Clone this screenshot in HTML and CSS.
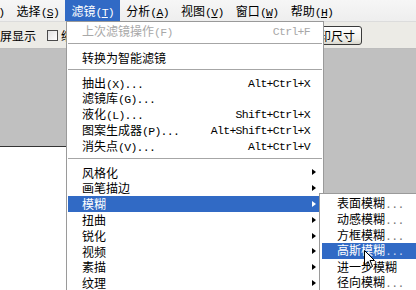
FILE: index.html
```html
<!DOCTYPE html>
<html lang="zh">
<head>
<meta charset="utf-8">
<title>滤镜菜单</title>
<link rel="stylesheet" href="styles.css">
</head>
<body>
<div class="menubar">
  <span class="mi first">图像<span class="a">(<span class="u">I</span>)</span></span>
  <span class="mi">选择<span class="a">(<span class="u">S</span>)</span></span>
  <span class="mi on">滤镜<span class="a">(<span class="u">T</span>)</span></span>
  <span class="mi">分析<span class="a">(<span class="u">A</span>)</span></span>
  <span class="mi">视图<span class="a">(<span class="u">V</span>)</span></span>
  <span class="mi">窗口<span class="a">(<span class="u">W</span>)</span></span>
  <span class="mi">帮助<span class="a">(<span class="u">H</span>)</span></span>
</div>
<div class="toolbar">
  <span class="pre">以满屏显示</span>
  <span class="cb"></span>
  <span class="lbl">缩放所有窗口</span>
  <span class="btn">打印尺寸</span>
</div>
<div class="workspace">
  <div class="left">
    <div class="panel"></div>
    <div class="doc"></div>
  </div>
  <div class="right"></div>
</div>

<div class="menu">
  <div class="row dis"><span>上次滤镜操作<span class="a">(F)</span></span><span class="sc">Ctrl+F</span></div>
  <div class="sep"></div>
  <div class="row"><span>转换为智能滤镜</span></div>
  <div class="sep"></div>
  <div class="row"><span>抽出<span class="a">(X)...</span></span><span class="sc">Alt+Ctrl+X</span></div>
  <div class="row"><span>滤镜库<span class="a">(G)...</span></span></div>
  <div class="row"><span>液化<span class="a">(L)...</span></span><span class="sc">Shift+Ctrl+X</span></div>
  <div class="row"><span>图案生成器<span class="a">(P)...</span></span><span class="sc">Alt+Shift+Ctrl+X</span></div>
  <div class="row"><span>消失点<span class="a">(V)...</span></span><span class="sc">Alt+Ctrl+V</span></div>
  <div class="sep"></div>
  <div class="row"><span>风格化</span><i class="arr"></i></div>
  <div class="row"><span>画笔描边</span><i class="arr"></i></div>
  <div class="row on"><span>模糊</span><i class="arr"></i></div>
  <div class="row"><span>扭曲</span><i class="arr"></i></div>
  <div class="row"><span>锐化</span><i class="arr"></i></div>
  <div class="row"><span>视频</span><i class="arr"></i></div>
  <div class="row"><span>素描</span><i class="arr"></i></div>
  <div class="row"><span>纹理</span><i class="arr"></i></div>
</div>

<div class="sub">
  <div class="row"><span>表面模糊<span class="a dots">...</span></span></div>
  <div class="row"><span>动感模糊<span class="a dots">...</span></span></div>
  <div class="row"><span>方框模糊<span class="a dots">...</span></span></div>
  <div class="row on"><span>高斯模糊<span class="a dots">...</span></span></div>
  <div class="row"><span>进一步模糊</span></div>
  <div class="row"><span>径向模糊<span class="a dots">...</span></span></div>
</div>

<svg class="cursor" width="12" height="19" viewBox="0 0 12 19">
  <path d="M0.5 0.5 V15 L4 11.5 L6.5 17.5 L8.5 16.5 L6 10.5 H10.5 Z" fill="#fff" stroke="#000" stroke-width="1"/>
</svg>
</body>
</html>
```

FILE: styles.css
```css
* {
  box-sizing: border-box;
  margin: 0;
  padding: 0;
}

html, body {
  width: 416px;
  height: 290px;
  overflow: hidden;
}

body {
  position: relative;
  font-family: "Noto Sans CJK SC", sans-serif;
  font-size: 12px;
  color: #000;
  background: #c0c0c0;
}

.a {
  font-family: "Liberation Mono", monospace;
  font-size: 11.5px;
  letter-spacing: -0.7px;
}

.u {
  text-decoration: underline;
}

/* menu bar */
.menubar {
  height: 21px;
  display: flex;
  white-space: nowrap;
  background: linear-gradient(#f6f6f6, #eeeeee);
}

.mi {
  padding: 0 6.1px;
  line-height: 21px;
}

.mi.first {
  margin-left: -44.3px;
}

.mi.on {
  background: #316ac5;
  color: #fff;
}

/* toolbar */
.toolbar {
  height: 28px;
  display: flex;
  align-items: center;
  white-space: nowrap;
  background: #ecebe6;
  border-top: 1px solid #dcdcdc;
  border-bottom: 1px solid #bdbdbd;
}

.pre {
  margin-left: -24px;
}

.cb {
  width: 11px;
  height: 11px;
  margin-left: 11px;
  border: 1px solid #4a4a4a;
  background: linear-gradient(135deg, #e0e0e0, #fff);
}

.lbl {
  margin-left: 3px;
}

.btn {
  margin-left: auto;
  margin-right: 54px;
  height: 19px;
  line-height: 17px;
  padding: 0 6px;
  border: 1px solid #3a3a3a;
  border-radius: 3px;
  background: linear-gradient(#ffffff, #f0f0ea 70%, #d8d6cc);
}

/* workspace */
.workspace {
  display: flex;
  height: 241px;
}

.left {
  width: 66px;
  display: flex;
  flex-direction: column;
}

.panel {
  height: 98px;
  background: #c0c0c0;
  border-bottom: 1px solid #333;
}

.doc {
  flex: 1;
  background: #fff;
}

.right {
  flex: 1;
  background: #c0c0c0;
}

/* dropdown menu */
.menu {
  position: absolute;
  left: 66px;
  top: 21px;
  width: 258px;
  height: 280px;
  padding: 2px 1px 0 1px;
  background: #fff;
  border: 1px solid #9a9a9a;
  white-space: nowrap;
}

.row {
  height: 15.8px;
  line-height: 15.8px;
  display: flex;
  align-items: center;
  padding: 0 12px 0 14px;
}

.row.dis {
  color: #a8a8a8;
}

.row.on {
  background: #316ac5;
  color: #fff;
}

.sc {
  margin-left: auto;
  font-family: "Liberation Mono", monospace;
  font-size: 11.5px;
  letter-spacing: -0.7px;
}

.arr {
  margin-left: auto;
  margin-right: -6px;
  width: 0;
  height: 0;
  border-left: 4px solid #000;
  border-top: 3.5px solid transparent;
  border-bottom: 3.5px solid transparent;
}

.row.on .arr {
  border-left-color: #fff;
}

.sep {
  height: 10px;
  padding-top: 3px;
}

.sep::before {
  content: "";
  display: block;
  border-top: 1px solid #a6a6a6;
}

/* submenu */
.sub {
  position: absolute;
  left: 319px;
  top: 193px;
  width: 110px;
  height: 110px;
  padding: 2px;
  background: #fff;
  border: 1px solid #9a9a9a;
  white-space: nowrap;
}

.sub .row {
  padding: 0 4px 0 15px;
}

.dots {
  color: #777;
}

.row.on .dots {
  color: #c8d4ee;
}

.cursor {
  position: absolute;
  left: 364px;
  top: 250px;
}
```
